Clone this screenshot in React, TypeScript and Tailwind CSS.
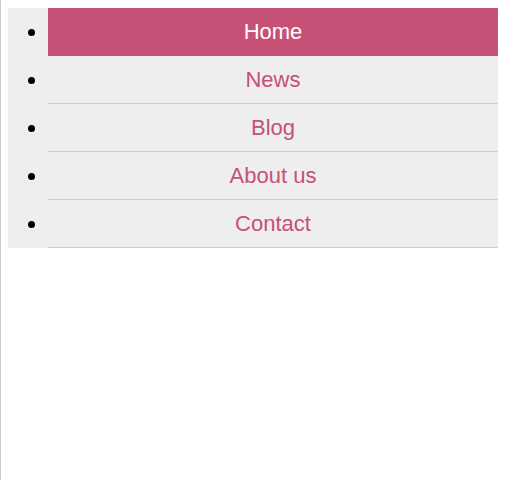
const items = ['Home', 'News', 'Blog', 'About us', 'Contact'];

export default function App() {
  return (
    <div className="min-h-screen border-l border-[#cccccc] bg-white pt-2 pl-[7px] pr-2 font-['Liberation_Sans',Arial,sans-serif]">
      <ul className="list-disc bg-[#eeeeee] pl-10 text-[22px]">
        {items.map((item, i) => (
          <li
            key={item}
            className={
              i === 0
                ? 'border-b border-[#c75077] bg-[#c75077]'
                : 'border-b border-[#cccccc]'
            }
          >
            <a
              href="#"
              className={
                'block text-center leading-[47px] ' +
                (i === 0 ? 'text-white' : 'text-[#c75077]')
              }
            >
              {item}
            </a>
          </li>
        ))}
      </ul>
    </div>
  );
}
